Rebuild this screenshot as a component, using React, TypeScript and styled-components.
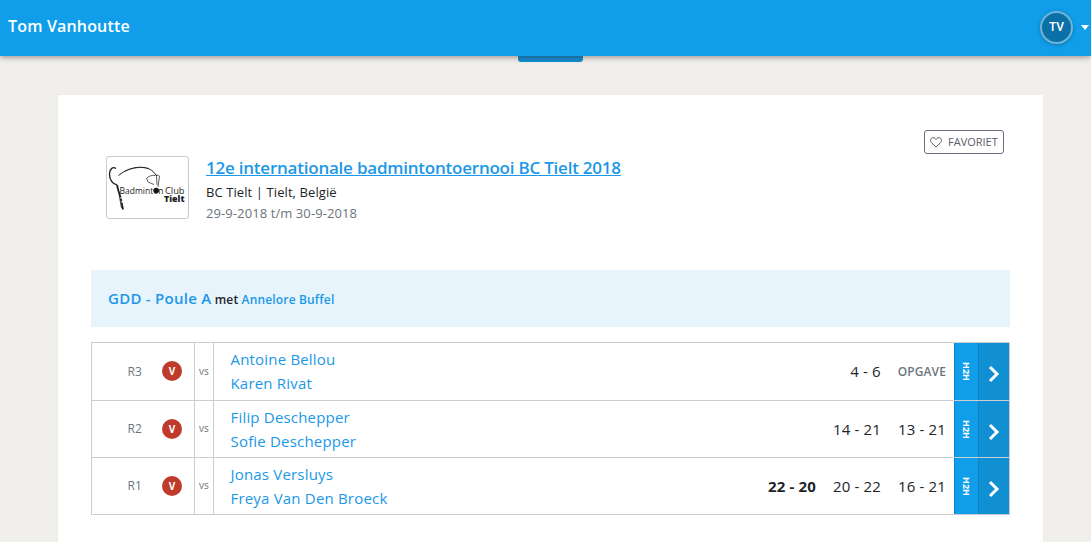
import React from "react";
import styled, { createGlobalStyle } from "styled-components";

const GlobalStyle = createGlobalStyle`
  * { box-sizing: border-box; }
  html, body { margin: 0; height: 100%; overflow: hidden; }
  body {
    background: #f0efeb;
    color: #212529;
    font-family: "Open Sans", "Noto Sans", sans-serif;
    font-size: 13px;
  }
  a { color: #1b98e8; text-decoration: none; }
`;

const Page = styled.div`
  height: 542px;
  overflow: hidden;
  display: flex;
  flex-direction: column;
  align-items: center;
`;

const TopBar = styled.header`
  position: relative;
  z-index: 2;
  width: 100%;
  height: 56px;
  flex: none;
  padding: 0 2px 0 8px;
  display: flex;
  align-items: center;
  justify-content: space-between;
  background: #109eea;
  box-shadow: 0 1px 6px rgba(50, 30, 30, 0.5);
`;

const UserName = styled.div`
  color: #fff;
  font-size: 16px;
  font-weight: 600;
  line-height: 24px;
  letter-spacing: 0.17px;
  padding-bottom: 4px;
`;

const Account = styled.div`
  display: flex;
  align-items: center;
  gap: 8px;
  padding-bottom: 1px;
`;

const Avatar = styled.div`
  width: 33px;
  height: 33px;
  border: 2px solid #70b4d8;
  border-radius: 50%;
  background: #0b70a7;
  color: #fff;
  font: 500 12px/29px Roboto, sans-serif;
  text-align: center;
  box-shadow: 0 1px 4px rgba(0, 0, 0, 0.25);
`;

const Caret = styled.div`
  border: 4px solid transparent;
  border-top: 5px solid #fff;
  border-bottom: 0;
`;

const PullTab = styled.div`
  width: 65px;
  height: 6px;
  flex: none;
  margin-left: 10px;
  border-radius: 0 0 3px 3px;
  background: #108fd3;
`;

const Card = styled.main`
  width: 985px;
  height: 480px;
  flex: none;
  margin: 33px 0 0 10px;
  padding: 35px 33px 0;
  background: #fff;
  box-shadow: 0 0 2px rgba(0, 0, 0, 0.04);
`;

const TournamentHeader = styled.section`
  height: 140px;
  padding-left: 15px;
  display: flex;
  align-items: flex-start;
`;

const LogoFrame = styled.div`
  width: 83px;
  height: 63px;
  margin: 26px 17px 0 0;
  border: 1px solid #c9cbd2;
  border-radius: 3px;
`;

const TournamentText = styled.div`
  flex: 1;
  padding-top: 26px;
`;

const TournamentTitle = styled.h1`
  margin: 0;
  font-size: 17px;
  font-weight: 550;
  line-height: 24px;
  letter-spacing: -0.225px;
  white-space: nowrap;
  a {
    text-decoration: underline;
    text-decoration-thickness: 1px;
    text-underline-offset: 1px;
  }
`;

const Meta = styled.div<{ $muted?: boolean }>`
  line-height: 21px;
  padding-top: ${(p) => (p.$muted ? 0 : 2)}px;
  letter-spacing: 0.09px;
  color: ${(p) => (p.$muted ? "#6c757d" : "#212529")};
`;

const FavoriteButton = styled.button`
  width: 80px;
  height: 24px;
  margin-right: 6px;
  padding: 0 5px;
  display: flex;
  align-items: center;
  gap: 6px;
  border: 1px solid #6b6c80;
  border-radius: 3px;
  background: #fff;
  color: #5b5d66;
  font: 400 11px/22px "Open Sans", sans-serif;
`;

const DrawBar = styled.section`
  height: 57px;
  padding-left: 17px;
  background: #e8f4fb;
  font-size: 12px;
  font-weight: 550;
  letter-spacing: 0.16px;
  line-height: 57px;
  white-space: nowrap;
`;

const DrawLink = styled.a`
  font-size: 15px;
  font-weight: 580;
  letter-spacing: 0.26px;
`;

const Matches = styled.div`
  width: 919px;
  margin-top: 15px;
  border: 1px solid #cbcdd3;
`;

const MatchRow = styled.div`
  display: flex;
  height: 57px;
  & + & {
    border-top: 1px solid #cbcdd3;
  }
`;

const RoundCell = styled.div`
  width: 103px;
  padding: 0 12px 1px 35.5px;
  display: flex;
  align-items: center;
  justify-content: space-between;
  border-right: 1px solid #cbcdd3;
  color: #6c757d;
  font-size: 12px;
`;

const ResultBadge = styled.span`
  width: 20px;
  height: 20px;
  border-radius: 50%;
  background: #bf3a2b;
  color: #fff;
  font-size: 10px;
  font-weight: 700;
  line-height: 20px;
  text-align: center;
`;

const VersusCell = styled.div`
  width: 19px;
  padding-bottom: 2px;
  display: flex;
  align-items: center;
  justify-content: center;
  border-right: 1px solid #cbcdd3;
  color: #6c757d;
  font-size: 10px;
`;

const Players = styled.div`
  flex: 1;
  padding: 4px 0 0 16.5px;
  display: flex;
  flex-direction: column;
  font-size: 15px;
  line-height: 24px;
  letter-spacing: 0.19px;
`;

const Scores = styled.div`
  display: flex;
  align-items: center;
  gap: 17px;
  padding: 0 8px 1px 0;
`;

const Score = styled.span<{ $won?: boolean }>`
  font-size: 15px;
  line-height: 20px;
  font-weight: ${(p) => (p.$won ? 700 : 400)};
  letter-spacing: 0.15px;
`;

const Retired = styled.span`
  color: #6c757d;
  font-size: 12px;
  font-weight: 550;
  letter-spacing: 0.1px;
`;

const HeadToHead = styled.a`
  width: 25px;
  padding-right: 1px;
  display: flex;
  align-items: center;
  justify-content: center;
  border-left: 1px solid #0d83c2;
  border-right: 1px solid #0d83c2;
  background: #109eea;
  span {
    color: #fff;
    font-size: 9px;
    font-weight: 700;
    line-height: 12px;
    writing-mode: vertical-rl;
  }
`;

const Details = styled.a`
  width: 30px;
  padding-top: 5px;
  display: flex;
  align-items: center;
  justify-content: center;
  background: #108fd3;
`;

function ClubLogo() {
  return (
    <svg width="81" height="61" viewBox="107 157 81 61" fill="none" stroke="#1d1d1d">
      <path d="M116 168.500c-3-2-6 0-6.500 5-.3 6 3.500 11.500 7.500 11" strokeWidth="1.300" />
      <path d="M118.500 175.500c5-4 10-6.500 16-7.700 8-1.500 15 .2 18.500 3.700l4 4.500" strokeWidth="1" />
      <path d="M124 171.500c8-4 17-5 25-3" strokeWidth="0.600" />
      <path d="M147 178c2-2 5-3 8-2.500M159.500 176c-1-1-3-1-4-.5M146.500 178l1.500 4 6 2.500M159.500 176l-1.500 11M156.500 176l.5 9" strokeWidth="0.700" />
      <path d="M117 185c1 5 2 8 3.500 12l2.500 12.500" strokeWidth="1.800" strokeDasharray="13 1 3 1" />
      <path d="M119 194l2.500 14" strokeWidth="0.800" />
      <circle cx="156.200" cy="190.500" r="2.800" fill="#111" stroke="none" />
      <g fill="#1d1d1d" stroke="none" fontFamily="Open Sans, sans-serif">
        <text x="119.500" y="193.500" fontSize="9.500" textLength="44" lengthAdjust="spacingAndGlyphs">Badminton</text>
        <text x="165" y="193.500" fontSize="9.500" textLength="19.500" lengthAdjust="spacingAndGlyphs">Club</text>
        <text x="164" y="202" fontSize="9" fontWeight="800" textLength="20.500" lengthAdjust="spacingAndGlyphs">Tielt</text>
      </g>
    </svg>
  );
}

function Heart() {
  return (
    <svg width="12" height="11" viewBox="0 0 12 11" fill="none" stroke="#5b5d66" strokeWidth="1">
      <path d="M6 10 1.400 5.500C-.4 3.400.8.7 3.100.7 4.500.7 5.400 1.500 6 2.500 6.600 1.500 7.500.7 8.900.7c2.300 0 3.500 2.700 1.700 4.800Z" strokeLinejoin="round" />
    </svg>
  );
}

function Chevron() {
  return (
    <svg width="12" height="18" viewBox="0 0 12 18" fill="none" stroke="#fff" strokeWidth="3">
      <path d="m2 2 7 7-7 7" />
    </svg>
  );
}

type Match = {
  round: string;
  players: string[];
  scores: { text: string; won?: boolean }[];
  retired?: boolean;
};

const matches: Match[] = [
  { round: "R3", players: ["Antoine Bellou", "Karen Rivat"], scores: [{ text: "4 - 6" }], retired: true },
  { round: "R2", players: ["Filip Deschepper", "Sofie Deschepper"], scores: [{ text: "14 - 21" }, { text: "13 - 21" }] },
  {
    round: "R1",
    players: ["Jonas Versluys", "Freya Van Den Broeck"],
    scores: [{ text: "22 - 20", won: true }, { text: "20 - 22" }, { text: "16 - 21" }],
  },
];

export default function App() {
  return (
    <Page>
      <GlobalStyle />
      <TopBar>
        <UserName>Tom Vanhoutte</UserName>
        <Account>
          <Avatar>TV</Avatar>
          <Caret />
        </Account>
      </TopBar>
      <PullTab />
      <Card>
        <TournamentHeader>
          <LogoFrame>
            <ClubLogo />
          </LogoFrame>
          <TournamentText>
            <TournamentTitle>
              <a href="#">12e internationale badmintontoernooi BC Tielt 2018</a>
            </TournamentTitle>
            <Meta>BC Tielt | Tielt, België</Meta>
            <Meta $muted>29-9-2018 t/m 30-9-2018</Meta>
          </TournamentText>
          <FavoriteButton>
            <Heart />
            FAVORIET
          </FavoriteButton>
        </TournamentHeader>
        <DrawBar>
          <DrawLink href="#">GDD - Poule A</DrawLink> met <a href="#">Annelore Buffel</a>
        </DrawBar>
        <Matches>
          {matches.map((m) => (
            <MatchRow key={m.round}>
              <RoundCell>
                {m.round}
                <ResultBadge>V</ResultBadge>
              </RoundCell>
              <VersusCell>vs</VersusCell>
              <Players>
                {m.players.map((name) => (
                  <a href="#" key={name}>
                    {name}
                  </a>
                ))}
              </Players>
              <Scores>
                {m.scores.map((s) => (
                  <Score key={s.text} $won={s.won}>
                    {s.text}
                  </Score>
                ))}
                {m.retired && <Retired>OPGAVE</Retired>}
              </Scores>
              <HeadToHead href="#">
                <span>H2H</span>
              </HeadToHead>
              <Details href="#">
                <Chevron />
              </Details>
            </MatchRow>
          ))}
        </Matches>
      </Card>
    </Page>
  );
}
